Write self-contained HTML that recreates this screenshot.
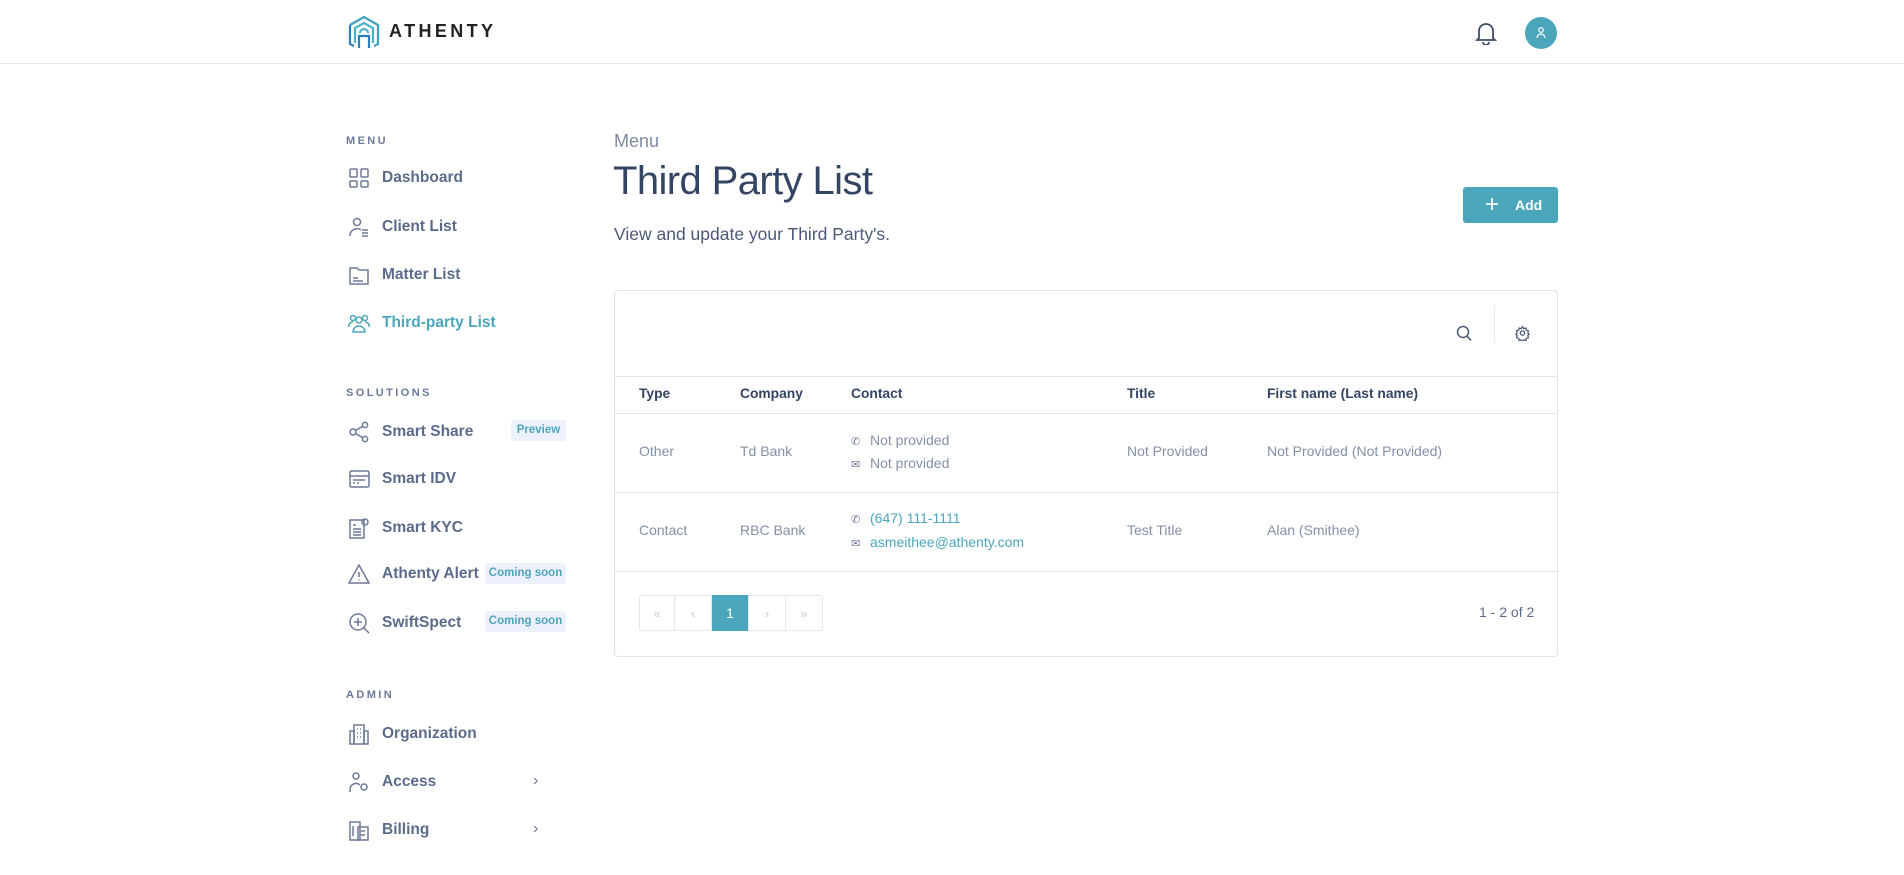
<!DOCTYPE html>
<html><head><meta charset="utf-8"><style>
*{box-sizing:border-box;margin:0;padding:0}
body{width:1904px;height:875px;background:#fff;font-family:"Liberation Sans",sans-serif;position:relative;overflow:hidden;color:#344563}
.abs{position:absolute}
.hdr{left:0;top:0;width:1904px;height:64px;border-bottom:1px solid #e1e6ef}
.sec{left:346px;font-size:11px;font-weight:bold;letter-spacing:2.4px;color:#6b7a99}
.item{left:348px;height:26px;display:flex;align-items:center;font-size:15.5px;font-weight:bold;color:#5b6b8a}
.item svg{width:22px;height:22px;margin-right:12px;fill:none;stroke:#6b7a99;stroke-width:1.5}
.item.act{color:#4ba6bc}.item.act svg{stroke:#4ba6bc}
.badge{position:absolute;height:21px;line-height:21px;font-size:11.5px;font-weight:bold;color:#4ba6bc;background:#edf1fb;border-radius:3px;text-align:center}
.chev{position:absolute;left:533px;font-size:16px;color:#6b7a99}
.card{left:614px;top:290px;width:944px;height:367px;border:1px solid #dfe3ec;border-radius:4px}
.line{position:absolute;left:0;width:942px;height:1px;background:#dfe3ec}
.th{position:absolute;top:386px;font-size:13.8px;font-weight:bold;color:#344563}
.td{position:absolute;font-size:14px;color:#8391a7}
.ic{display:inline-block;width:12px;margin-right:7px;color:#6b7a99;font-size:11px}
.link{color:#4ba6bc}
.pg{position:absolute;top:595px;height:36px;border:1px solid #e1e6ef;color:#c3c9d4;font-size:13px;display:flex;align-items:center;justify-content:center}
</style></head><body>
<div class="abs hdr"></div>
<svg class="abs" style="left:348px;top:16px" width="32" height="33" viewBox="0 0 32 33" fill="none" stroke-width="2.2">
<path d="M2 9 L16 1 L30 9 V28 L26 30" stroke="#3d9fc2"/><path d="M2 9 V28 L6 30" stroke="#2c7fb8"/>
<path d="M7 27 V12 L16 7 L25 12 V27" stroke="#4bb0cc"/><path d="M11 32 V20 H21 V32" stroke="#2c7fb8"/><path d="M12 17 a4 4 0 0 1 8 0" stroke="#4bb0cc"/></svg>
<div class="abs" style="left:389px;top:21px;font-size:18px;font-weight:bold;letter-spacing:3.4px;color:#222">ATHENTY</div>
<svg class="abs" style="left:1475px;top:21px" width="22" height="24" viewBox="0 0 22 24" fill="none" stroke="#3f4d6b" stroke-width="1.8"><path d="M4 17 V10 a7 7 0 0 1 14 0 V17 L20 19 H2 Z"/><path d="M8 21 a3 3 0 0 0 6 0"/></svg>
<div class="abs" style="left:1525px;top:17px;width:32px;height:32px;border-radius:50%;background:#4ba6bc"></div>
<svg class="abs" style="left:1535px;top:26px" width="12" height="14" viewBox="0 0 12 14" fill="none" stroke="#fff" stroke-width="1.2"><circle cx="6" cy="4" r="2.3"/><path d="M2 12 a4 4 0 0 1 8 0"/></svg>

<div class="abs sec" style="top:135px">MENU</div>
<div class="abs item" style="top:165px"><svg viewBox="0 0 22 22"><rect x="2" y="2" width="7" height="8" rx="1"/><rect x="13" y="2" width="7" height="8" rx="1"/><rect x="2" y="14" width="7" height="6" rx="1"/><rect x="13" y="14" width="7" height="6" rx="1"/></svg>Dashboard</div>
<div class="abs item" style="top:214px"><svg viewBox="0 0 22 22"><circle cx="9" cy="6" r="3.5"/><path d="M2 20 a7 7 0 0 1 11 -6"/><path d="M14 14h6M14 17h6M14 20h6"/></svg>Client List</div>
<div class="abs item" style="top:262px"><svg viewBox="0 0 22 22"><path d="M2 4 h7 l2 2 h9 v14 h-18z"/><path d="M5 14h5M5 17h10"/></svg>Matter List</div>
<div class="abs item act" style="top:310px"><svg viewBox="0 0 22 22"><circle cx="11" cy="8" r="3"/><circle cx="5" cy="6" r="2.5"/><circle cx="17" cy="6" r="2.5"/><path d="M5 20 a6 6 0 0 1 12 0z"/><path d="M1 15 a4 4 0 0 1 4 -5M21 15 a4 4 0 0 0 -4 -5"/></svg>Third-party List</div>

<div class="abs sec" style="top:387px">SOLUTIONS</div>
<div class="abs item" style="top:419px"><svg viewBox="0 0 22 22"><circle cx="5" cy="11" r="3"/><circle cx="17" cy="4" r="2.6"/><circle cx="17" cy="18" r="2.6"/><path d="M7.5 9.5 L14.7 5.3M7.5 12.5 L14.7 16.7"/></svg>Smart Share</div>
<div class="badge" style="left:511px;top:420px;width:55px">Preview</div>
<div class="abs item" style="top:466px"><svg viewBox="0 0 22 22"><rect x="2" y="3" width="19" height="16" rx="1.5"/><path d="M2 8h19M5 12h12M5 15h2M9 15h2"/></svg>Smart IDV</div>
<div class="abs item" style="top:515px"><svg viewBox="0 0 22 22"><rect x="2" y="3" width="14" height="18"/><circle cx="17" cy="5" r="3"/><path d="M5 8h3M5 12h8M5 15h8M5 18h8"/></svg>Smart KYC</div>
<div class="abs item" style="top:561px"><svg viewBox="0 0 22 22"><path d="M11 2 L21 20 H1 Z"/><path d="M11 9 v5M11 16.5 v1"/></svg>Athenty Alert</div>
<div class="badge" style="left:485px;top:563px;width:81px">Coming soon</div>
<div class="abs item" style="top:610px"><svg viewBox="0 0 22 22"><circle cx="10" cy="10" r="8"/><path d="M16 16 L21 21M10 6v8M6 10h8"/></svg>SwiftSpect</div>
<div class="badge" style="left:485px;top:611px;width:81px">Coming soon</div>

<div class="abs sec" style="top:689px">ADMIN</div>
<div class="abs item" style="top:721px"><svg viewBox="0 0 22 22"><rect x="6" y="2" width="10" height="19"/><path d="M2 8h4v13h-4zM16 8h4v13h-4z"/><path d="M9 6h1M12 6h1M9 10h1M12 10h1M9 14h1M12 14h1"/></svg>Organization</div>
<div class="abs item" style="top:769px"><svg viewBox="0 0 22 22"><circle cx="8" cy="5" r="3"/><path d="M2 21 v-3 a6 6 0 0 1 10 -4"/><circle cx="16" cy="16" r="3"/></svg>Access</div>
<div class="chev" style="top:772px">›</div>
<div class="abs item" style="top:817px"><svg viewBox="0 0 22 22"><rect x="2" y="3" width="10" height="18"/><rect x="10" y="8" width="10" height="13"/><path d="M5 7v10M13 12h4M13 16h4"/></svg>Billing</div>
<div class="chev" style="top:820px">›</div>

<div class="abs" style="left:614px;top:131px;font-size:18px;color:#7d8ba4">Menu</div>
<div class="abs" style="left:613px;top:159px;font-size:40px;color:#344563;letter-spacing:-0.6px">Third Party List</div>
<div class="abs" style="left:614px;top:224px;font-size:17.5px;color:#4b5a78">View and update your Third Party's.</div>
<div class="abs" style="left:1463px;top:187px;width:95px;height:36px;background:#4ba6bc;border-radius:3px;color:#fff;font-size:14px;font-weight:bold;display:flex;align-items:center;padding-left:22px"><span style="font-size:24px;font-weight:normal;margin-right:16px;line-height:1">+</span>Add</div>

<div class="abs card">
<div class="line" style="top:85px"></div><div class="line" style="top:122px"></div><div class="line" style="top:201px"></div><div class="line" style="top:280px"></div>
<div style="position:absolute;left:879px;top:15px;width:1px;height:36px;background:#e6e9f0"></div>
</div>
<svg class="abs" style="left:1456px;top:325px" width="16" height="17" viewBox="0 0 16 17" fill="none" stroke="#4b5a78" stroke-width="1.5"><circle cx="7" cy="7" r="5.5"/><path d="M11 11 L15 15.5"/></svg>
<svg class="abs" style="left:1515px;top:325px" width="15" height="16" viewBox="0 0 24 24" fill="none" stroke="#4b5a78" stroke-width="2"><circle cx="12" cy="12" r="3.5"/><path d="M12 2 l2 3 3.5-1 .5 3.5 3.5 1 -1 3.5 2 2 -2 2 1 3.5 -3.5 1 -.5 3.5 -3.5 -1 -2 3 -2 -3 -3.5 1 -.5 -3.5 -3.5 -1 1 -3.5 -2 -2 2 -2 -1 -3.5 3.5 -1 .5 -3.5 3.5 1z"/></svg>

<div class="th" style="left:639px">Type</div><div class="th" style="left:740px">Company</div><div class="th" style="left:851px">Contact</div><div class="th" style="left:1127px">Title</div><div class="th" style="left:1267px">First name (Last name)</div>

<div class="td" style="left:639px;top:443px">Other</div><div class="td" style="left:740px;top:443px">Td Bank</div>
<div class="td" style="left:851px;top:432px"><span class="ic">✆</span>Not provided</div>
<div class="td" style="left:851px;top:455px"><span class="ic">✉</span>Not provided</div>
<div class="td" style="left:1127px;top:443px">Not Provided</div><div class="td" style="left:1267px;top:443px">Not Provided (Not Provided)</div>

<div class="td" style="left:639px;top:522px">Contact</div><div class="td" style="left:740px;top:522px">RBC Bank</div>
<div class="td" style="left:851px;top:510px"><span class="ic">✆</span><span class="link">(647) 111-1111</span></div>
<div class="td" style="left:851px;top:534px"><span class="ic">✉</span><span class="link">asmeithee@athenty.com</span></div>
<div class="td" style="left:1127px;top:522px">Test Title</div><div class="td" style="left:1267px;top:522px">Alan (Smithee)</div>

<div class="pg" style="left:639px;width:36px;border-radius:3px 0 0 3px">«</div>
<div class="pg" style="left:674px;width:38px">‹</div>
<div class="pg" style="left:712px;width:36px;background:#4ba6bc;border-color:#4ba6bc;color:#fff;font-size:14px">1</div>
<div class="pg" style="left:748px;width:38px">›</div>
<div class="pg" style="left:785px;width:38px;border-radius:0 3px 3px 0">»</div>
<div class="td" style="left:1479px;top:604px;color:#5b6b8a">1 - 2 of 2</div>
</body></html>
